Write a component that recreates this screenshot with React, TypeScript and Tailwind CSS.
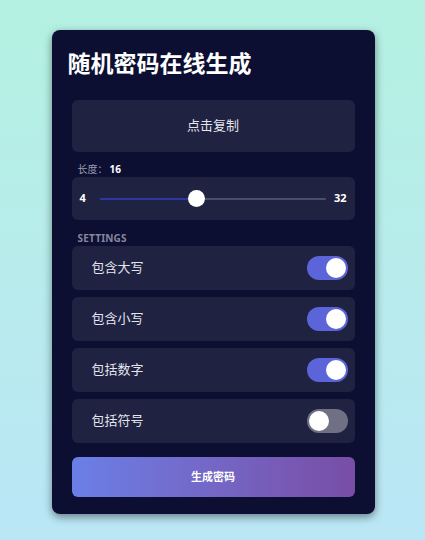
import React, { useState } from "react";

const font = { fontFamily: '"Noto Sans", "Noto Sans CJK SC", sans-serif' };

function Toggle({ on }: { on: boolean }) {
  return (
    <div
      className={`relative w-[41px] h-[24px] rounded-full ${on ? "bg-[#5c64d9]" : "bg-[#6f7083]"}`}
    >
      <div
        className={`absolute top-[2px] w-[20px] h-[20px] rounded-full bg-white ${on ? "right-[2px]" : "left-[2px]"}`}
      />
    </div>
  );
}

export default function App() {
  const [opts] = useState([
    { label: "包含大写", on: true },
    { label: "包含小写", on: true },
    { label: "包括数字", on: true },
    { label: "包括符号", on: false },
  ]);
  const len = 16;
  const pct = ((len - 4) / (32 - 4)) * 100;

  return (
    <div
      className="w-full h-[540px] bg-gradient-to-b from-[#b4f1e1] to-[#bae6f6] flex justify-center pt-[30px] pl-[1px]"
      style={font}
    >
      <div className="w-[323px] h-[484px] rounded-[8px] bg-[#0c0f31] shadow-[0_3px_8px_rgba(0,0,0,0.45)] px-[20px] pt-[18px] flex flex-col">
        <h1 className="text-[23px] leading-[30px] font-bold text-white -ml-[4px]">
          随机密码在线生成
        </h1>
        <div className="mt-[22px] h-[52px] rounded-[6px] bg-[#1f2240] flex items-center justify-center text-[13px] text-[#e4e5ee]">
          点击复制
        </div>
        <div className="mt-[10px] h-[15px] leading-[15px] text-[10px] pl-[6px] flex items-center">
          <span className="text-[#9a9cb2]">长度：</span>
          <span className="text-white font-bold ml-[2px]">{len}</span>
        </div>
        <div className="h-[43px] rounded-[6px] bg-[#1f2240] flex items-center pl-[8px] pr-[8px]">
          <span className="text-[11px] font-bold text-white w-[7px]">4</span>
          <div className="relative flex-1 h-[2px] bg-[#4b4e68] rounded-full ml-[13px] mr-[8px]">
            <div className="absolute left-0 top-0 h-[2px] bg-[#2c37a6] rounded-full" style={{ width: `${pct}%` }} />
            <div
              className="absolute top-1/2 w-[17px] h-[17px] -mt-[8.5px] -ml-[8.5px] rounded-full bg-white"
              style={{ left: `${pct}%` }}
            />
          </div>
          <span className="text-[11px] font-bold text-white">32</span>
        </div>
        <div className="mt-[11px] h-[14px] leading-[14px] text-[10px] font-bold text-[#85879f] pl-[6px] tracking-[0.2px]">
          SETTINGS
        </div>
        <div className="mt-[1px] flex flex-col gap-[7px]">
          {opts.map((o) => (
            <div
              key={o.label}
              className="h-[44px] rounded-[6px] bg-[#1f2240] flex items-center justify-between pl-[20px] pr-[7px]"
            >
              <span className="text-[13px] text-[#e4e5ee]">{o.label}</span>
              <Toggle on={o.on} />
            </div>
          ))}
        </div>
        <button className="mt-[14px] h-[40px] rounded-[6px] bg-gradient-to-r from-[#6a7fe6] to-[#784da6] text-white text-[11px] font-bold">
          生成密码
        </button>
      </div>
    </div>
  );
}
